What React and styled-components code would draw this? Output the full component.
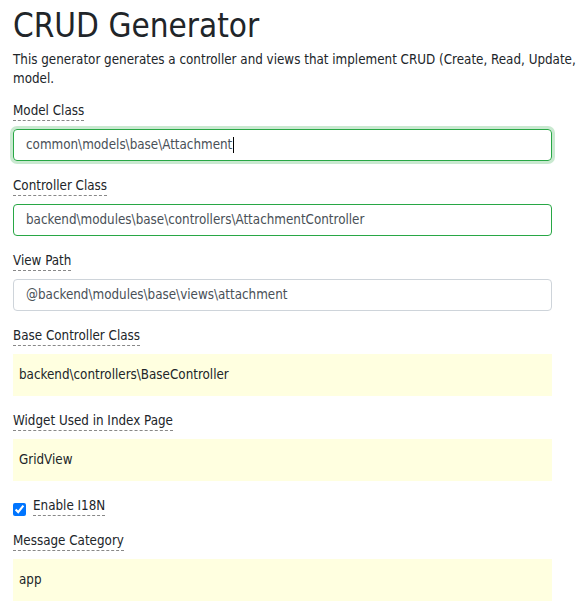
import React from 'react'
import styled, { createGlobalStyle } from 'styled-components'

const GlobalStyle = createGlobalStyle`
  html, body {
    margin: 0;
    padding: 0;
    overflow: hidden;
    background: #fff;
  }
  body {
    font-family: "DejaVu Sans Condensed", "DejaVu Sans", sans-serif;
    font-stretch: condensed;
    color: #212529;
  }
`

const Page = styled.div`
  padding: 6px 0 0 13px;
  width: 860px;
`

const Title = styled.h1`
  margin: 0;
  font-size: 33px;
  line-height: 40px;
  font-weight: normal;
`

const Intro = styled.p`
  margin: 4px 0 14px;
  font-size: 13.3px;
  line-height: 19px;
  width: 840px;
`

const Form = styled.div`
  width: 539px;
`

const Group = styled.div`
  display: flex;
  flex-direction: column;
  align-items: flex-start;
  gap: 8px;
  margin-bottom: 16px;
`

const CheckRow = styled.div`
  display: flex;
  align-items: flex-start;
  gap: 7px;
  margin-bottom: 16px;
`

const Label = styled.label`
  display: inline-block;
  font-size: 13.3px;
  line-height: 18px;
  border-bottom: 1px dashed #888;
  color: #212529;
`

const Input = styled.div`
  box-sizing: border-box;
  width: 100%;
  height: 32px;
  padding: 0 12px;
  font-size: 13.3px;
  line-height: 30px;
  color: #495057;
  white-space: nowrap;
  border: 1px solid ${(p) => (p.$valid ? '#28a745' : '#ced4da')};
  border-radius: 4px;
  box-shadow: ${(p) => (p.$focus ? '0 0 0 3px rgba(40, 167, 69, 0.25)' : 'none')};
`

const Caret = styled.span`
  display: inline-block;
  width: 1px;
  height: 16px;
  margin-left: 1px;
  background: #000;
  vertical-align: -4px;
`

const Sticky = styled.div`
  box-sizing: border-box;
  width: 100%;
  height: 42px;
  padding: 0 6px;
  font-size: 13.3px;
  line-height: 42px;
  background: #ffffe0;
  color: #212529;
`

const Check = styled.input`
  width: 13px;
  height: 13px;
  margin: 6px 0 0;
`

const App = () => {
  return (
    <>
      <GlobalStyle />
      <Page>
        <Title>CRUD Generator</Title>
        <Intro>
          This generator generates a controller and views that implement CRUD (Create, Read, Update, Delete)
          operations for the specified data
          <br />
          model.
        </Intro>
        <Form>
          <Group>
            <Label>Model Class</Label>
            <Input $valid $focus>
              common\models\base\Attachment
              <Caret />
            </Input>
          </Group>
          <Group>
            <Label>Controller Class</Label>
            <Input $valid>backend\modules\base\controllers\AttachmentController</Input>
          </Group>
          <Group>
            <Label>View Path</Label>
            <Input>@backend\modules\base\views\attachment</Input>
          </Group>
          <Group>
            <Label>Base Controller Class</Label>
            <Sticky>backend\controllers\BaseController</Sticky>
          </Group>
          <Group>
            <Label>Widget Used in Index Page</Label>
            <Sticky>GridView</Sticky>
          </Group>
          <CheckRow>
            <Check type="checkbox" checked readOnly />
            <Label>Enable I18N</Label>
          </CheckRow>
          <Group>
            <Label>Message Category</Label>
            <Sticky>app</Sticky>
          </Group>
        </Form>
      </Page>
    </>
  )
}

export default App
